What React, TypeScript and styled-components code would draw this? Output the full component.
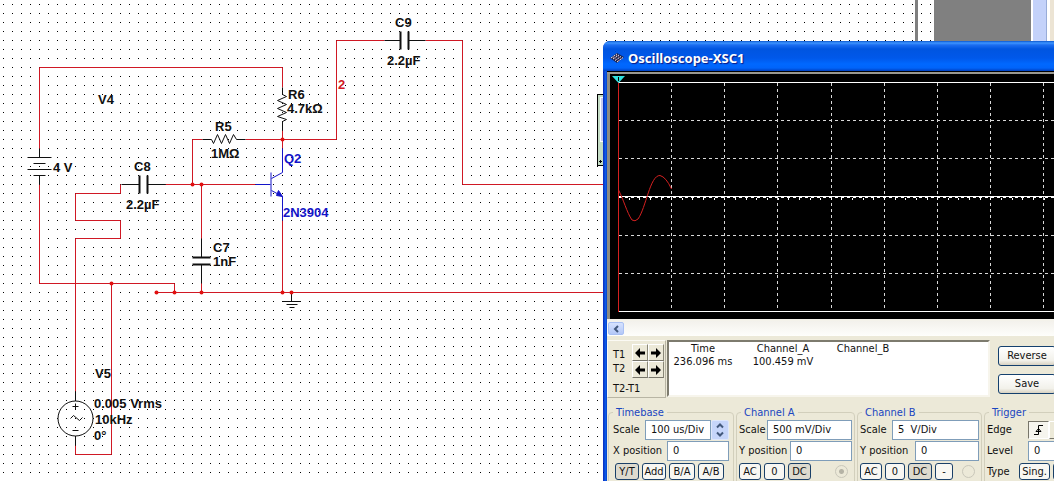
import React from "react";
import styled, { createGlobalStyle, css } from "styled-components";

const WIRE = "#d01824";
const NODE = "#e01010";
const PART = "#101010";
const CHIP = "#1414c8";

const Global = createGlobalStyle`
  *, *::before, *::after { box-sizing: border-box; }
  html, body { margin: 0; height: 100%; }
  body { overflow: hidden; background: #fff; }
  button, input { font: inherit; color: inherit; margin: 0; }
`;

const Desktop = styled.main`
  position: relative;
  height: 100vh;
  overflow: hidden;
  background: #fff;
  font: 11px/14px "DejaVu Sans Condensed", "Noto Sans", sans-serif;
  color: #111;
`;

const Schematic = styled.svg`
  display: block;
  width: 100%;
  height: 100%;
  text {
    font: bold 13px "Liberation Sans", Arial, sans-serif;
    fill: ${PART};
  }
  text.chip { fill: ${CHIP}; }
  text.net { fill: ${WIRE}; }
`;

/* ---------- oscilloscope window ---------- */

const Window = styled.section`
  position: absolute;
  top: 41px;
  left: 603px;
  right: 0;
  overflow: hidden;
  border-top-left-radius: 7px;
  padding-left: 4px;
  background: linear-gradient(90deg, #0a34c4 0 1px, #0a5ae8 2px 3px, #0838c0 4px);
`;

const TitleBar = styled.header`
  display: flex;
  align-items: center;
  gap: 4px;
  height: 30px;
  margin-left: -4px;
  padding: 4px 0 0 7px;
  background: linear-gradient(180deg, #0b57cf 0, #3d95ff 2px, #1c6df0 4px, #0055e0 8px, #0058ea 17px, #0068ff 23px, #0064fa 27px, #0040c0 30px);
  h1 {
    margin: 0;
    font: bold 13px/18px "Noto Sans", "Open Sans", sans-serif;
    color: #fff;
    text-shadow: 1px 1px 1px #0a1883;
  }
`;

const Body = styled.div`
  background: #ece9d8;
  overflow: hidden;
`;

const Screen = styled.div`
  height: 250px;
  background: #000;
  border-top: 1px solid #000;
  border-bottom: 2px solid #f4f2ea;
  box-shadow: inset 0 2px 0 #9a9890, inset 3px 0 0 #8c8a82;
  svg { display: block; width: 100%; height: 247px; }
`;

const ScrollTrack = styled.div`
  display: flex;
  align-items: center;
  height: 15px;
  background: linear-gradient(180deg, #f3f1ec, #fefefb);
`;

const ScrollButton = styled.button`
  display: grid;
  place-items: center;
  width: 16px;
  height: 13px;
  margin-left: 1px;
  padding: 0;
  border: 1px solid #a9c0f4;
  border-radius: 2px;
  background: linear-gradient(180deg, #d6e2fe, #b4c8f8);
`;

const ReadoutRow = styled.div`
  display: flex;
  width: max-content;
  min-width: 100%;
  padding-top: 4px;
`;

const Cursors = styled.div`
  display: flex;
  width: 59px;
  height: 58px;
  justify-content: space-between;
  padding: 3px 1px 0 5px;
  border: 1px solid #fbfaf4;
  border-right-color: #b8b5a4;
  border-bottom-color: #b8b5a4;
`;

const CursorNames = styled.div`
  display: flex;
  flex-direction: column;
  white-space: nowrap;
  width: 18px;
  padding-top: 4px;
  span:last-child { margin-top: 6px; }
`;

const CursorButtons = styled.div`
  display: grid;
  grid-template-columns: 16px 16px;
  grid-auto-rows: 17px;
  align-content: start;
`;

const ArrowButton = styled.button`
  display: grid;
  place-items: center;
  padding: 0;
  border: 1px solid;
  border-color: #fff #8a8878 #77756a #fff;
  background: #ece9d8;
`;

const Readout = styled.div`
  flex: 1 0 323px;
  max-width: 323px;
  height: 57px;
  margin-left: 1px;
  background: #fff;
  border: 2px solid;
  border-color: #7d7b6e #f7f5ec #f7f5ec #7d7b6e;
  table { border-collapse: collapse; table-layout: fixed; width: 228px; }
  th, td {
    padding: 0;
    font-weight: normal;
    text-align: center;
    line-height: 13px;
    white-space: nowrap;
  }
`;

const Actions = styled.div`
  display: flex;
  flex-direction: column;
  gap: 8px;
  padding: 6px 8px 0 8px;
`;

const PushButton = styled.button`
  width: 58px;
  height: 20px;
  padding: 0;
  border: 1px solid #14406e;
  border-radius: 3px;
  background: linear-gradient(180deg, #fff, #f2f1ea 75%, #d8d2c2);
`;

const Groups = styled.div`
  display: flex;
  width: max-content;
  gap: 2px;
  padding: 9px 0 0 1px;
`;

const Group = styled.fieldset<{ $width: number; $inset?: number }>`
  width: ${(p) => p.$width}px;
  margin: 0;
  padding: 0 ${(p) => p.$inset ?? 2}px 8px;
  border: 1px solid #d2cfbc;
  border-radius: 4px;
  min-width: 0;
  legend {
    margin-left: ${(p) => 4 - (p.$inset ?? 2)}px;
    padding: 0 3px;
    height: 11px;
    line-height: 11px;
    color: #1a46c0;
  }
`;

const Field = styled.div<{ $label?: number }>`
  display: flex;
  align-items: center;
  justify-content: space-between;
  height: 20px;
  margin-top: 1px;
  white-space: nowrap;
  ${(p) =>
    p.$label &&
    css`
      justify-content: flex-start;
      > :first-child { width: ${p.$label}px; }
    `}
  legend + & { margin-top: 2px; }
`;

const FieldBox = styled.span`
  display: flex;
`;

const TextBox = styled.input<{ $width: number }>`
  width: ${(p) => p.$width}px;
  height: 20px;
  padding: 0 0 2px 5px;
  border: 1px solid #7f9db9;
  background: #fff;
  outline: 0;
`;

const Spinner = styled.button`
  display: grid;
  place-items: center;
  width: 18px;
  height: 20px;
  padding: 0;
  border: 1px solid #dfe7fb;
  border-radius: 2px;
  background: #c6d5fa;
`;

const Modes = styled.div<{ $indent?: number }>`
  display: flex;
  align-items: center;
  gap: 3px;
  margin: 2px 0 0 ${(p) => p.$indent ?? 0}px;
`;

const TypeLabel = styled.span`
  width: 29px;
`;

const ModeButton = styled.button<{ $width: number; $pressed?: boolean }>`
  width: ${(p) => p.$width}px;
  height: 17px;
  padding: 0;
  line-height: 14px;
  border: 1px solid #1a4068;
  border-radius: 3px;
  background: #f8f7f2;
  ${(p) =>
    p.$pressed &&
    css`
      background: #dddace;
    `}
`;

const Radio = styled.input`
  appearance: none;
  width: 13px;
  height: 13px;
  margin: 0 4px 0 auto;
  border: 1px solid #c9c7ba;
  border-radius: 50%;
  &:checked { background: radial-gradient(circle, #b5b3a6 0 2px, transparent 3px); }
`;

const EdgeButton = styled.button<{ $pressed?: boolean }>`
  display: grid;
  place-items: center;
  width: 21px;
  height: 18px;
  padding: 0;
  border: 1px solid;
  border-color: ${(p) => (p.$pressed ? "#77756a #fff #fff #77756a" : "#fff #77756a #77756a #fff")};
  background: ${(p) => (p.$pressed ? "#f6f5ee" : "#ece9d8")};
`;

const Arrow = ({ right = false }: { right?: boolean }) => (
  <svg width="10" height="10" viewBox="0 0 10 10" aria-hidden="true">
    <path d={right ? "M10 5 5 0v3.5H0v3h5V10Z" : "M0 5 5 0v3.5h5v3H5V10Z"} fill="#000" />
  </svg>
);

const Edge = ({ falling = false }: { falling?: boolean }) => (
  <svg width="12" height="12" viewBox="0 0 12 12" fill="none" stroke="#000" aria-hidden="true">
    <path d={falling ? "M2 1.5h4v9h5M3.500 6h5" : "M1 10.500h4.500v-9H10M3 7.500l2.500-3 2.500 3Z"} />
  </svg>
);

const Dot = ({ x, y }: { x: number; y: number }) => (
  <circle cx={x + 0.5} cy={y + 0.5} r="2" fill={NODE} />
);

const Circuit = () => (
  <Schematic role="img" aria-label="Amplifier circuit">
    <defs>
      <pattern id="dots" x="3" y="4" width="9" height="9" patternUnits="userSpaceOnUse">
        <rect width="1" height="1" fill="#000" />
      </pattern>
    </defs>
    <rect width="100%" height="100%" fill="url(#dots)" />

    <rect x="915" width="3" height="481" fill="#808080" />
    <rect x="934" width="97" height="481" fill="#808080" />
    <rect x="1031" width="23" height="481" fill="#fff" />
    <rect x="1033" width="13" height="481" fill="#c4d2fa" />
    <rect x="1046" width="1" height="481" fill="#98acd8" />
    <rect x="1050" width="4" height="481" fill="#ece4d4" />

    <rect x="597.500" y="94.500" width="20" height="71" fill="#c4dcc4" stroke="#000" />
    <rect x="600.500" y="97.500" width="20" height="44" fill="#c8ccf0" stroke="#fff" />
    <path d="M599 161.500h3M600.500 160v3" stroke="#000" />

    <g transform="translate(.5 .5)" fill="none" stroke={WIRE}>
      <path d="M39 149V67H282V87" />
      <path d="M282 130V148M202 139H192V184M245 139H336V40H384" />
      <path d="M425 40H462V184H620" />
      <path d="M165 184H255M201 184V240M201 281V292" />
      <path d="M39 184V283H174V292M156 292H620M282 220V292" />
      <path d="M120 184V193H75V220H120V238H75V391M75 445V454H111V283" />
    </g>

    <g transform="translate(.5 .5)" fill="none" stroke={PART}>
      <path d="M39 148V157M27 157H51M33 163H45M27 169H51M33 175H45M39 175V184" />
      <path d="M121 184H139M147 184H165M384 40H400M408 40H425" />
      <path d="M139 175V193M147 175V193M400 31V49M408 31V49M192 257H210M192 264H210" strokeWidth="2" />
      <path d="M201 238V257M201 265V283" />
      <path d="M202 139H211L213 143 217 134 221 143 225 134 229 143 233 134 236 139H245" />
      <path d="M282 87V94L286 96 277 100 286 104 277 108 286 112 277 116 286 119 282 121V130" />
      <path d="M291 292V301M282 301H300M286 304H297M289 307H294" />
      <circle cx="75" cy="418" r="17.500" />
      <path d="M75 391V400M75 436V445M72 406H78M75 403V409M72 430H78" />
      <path d="M70 418 73 415 79 420 82 417" />
    </g>

    <g transform="translate(.5 .5)" fill="none" stroke={CHIP}>
      <path d="M282 148V172L271 178M255 184H270M271 190L282 196V220" />
      <path d="M270.500 172V196" strokeWidth="1" />
      <path d="M276 195 278 190 282 196Z" fill={CHIP} />
    </g>

    <Dot x={282} y={139} />
    <Dot x={192} y={184} />
    <Dot x={201} y={184} />
    <Dot x={111} y={283} />
    <Dot x={156} y={292} />
    <Dot x={174} y={292} />
    <Dot x={201} y={292} />
    <Dot x={282} y={292} />
    <Dot x={291} y={292} />

    <text x="98" y="104">V4</text>
    <text x="53" y="172">4 V</text>
    <text x="134" y="171">C8</text>
    <text x="126" y="209">2.2µF</text>
    <text x="215" y="131">R5</text>
    <text x="211" y="158">1MΩ</text>
    <text x="288" y="99">R6</text>
    <text x="287" y="113">4.7kΩ</text>
    <text x="395" y="27">C9</text>
    <text x="387" y="65">2.2µF</text>
    <text x="213" y="252">C7</text>
    <text x="213" y="266">1nF</text>
    <text x="95" y="378">V5</text>
    <text x="94" y="408">0.005 Vrms</text>
    <text x="95" y="424">10kHz</text>
    <text x="94" y="440">0°</text>
    <text className="net" x="338" y="89">2</text>
    <text className="chip" x="284" y="163">Q2</text>
    <text className="chip" x="283" y="217">2N3904</text>
  </Schematic>
);

const columns = Array.from({ length: 30 }, (_, i) => 64 + Math.round(i * 53.2));
const ticks = Array.from({ length: 150 }, (_, i) => 11 + Math.round(i * 10.64));

const Trace = () => (
  <svg role="img" aria-label="Channel A trace">
    <g transform="translate(.5 .5)" fill="none" stroke="#d8d8d8" shapeRendering="crispEdges">
      {columns.map((x) => (
        <path key={x} d={`M${x} 10V238`} strokeDasharray="3 3" />
      ))}
      {[48, 86, 163, 201].map((y) => (
        <path key={y} d={`M11 ${y}H1600`} strokeDasharray="3 3" />
      ))}
      <path d="M11 10H1600M11 124H1600M11 239H1600" stroke="#fff" />
      <path d="M11 125H1600" strokeDasharray="3 3" stroke="#fff" />
      {ticks.map((x) => (
        <path key={x} d={`M${x} 125V127`} stroke="#fff" />
      ))}
      <path d="M11 6V239" stroke="#d42020" />
    </g>
    <path
      d="M11.500 118C16 126 20 141 25 148Q28 150 31 147C39 136 43 103 53 103.500Q59 105 64.500 117"
      fill="none"
      stroke="#d42020"
    />
    <path d="M5 4H18L11.500 11Z" fill="#30e0e0" />
    <path d="M11.500 5V9" stroke="#000" />
  </svg>
);

const Channel = ({ name, width, scale, scaleWidth, offsetWidth, children }: {
  name: string;
  width: number;
  scale: string;
  scaleWidth: number;
  offsetWidth: number;
  children: React.ReactNode;
}) => {
  const id = name.replace(" ", "-");
  return (
    <Group $width={width}>
      <legend>{name}</legend>
      <Field>
        <label htmlFor={`${id}-scale`}>Scale</label>
        <TextBox id={`${id}-scale`} $width={scaleWidth} defaultValue={scale} />
      </Field>
      <Field>
        <label htmlFor={`${id}-pos`}>Y position</label>
        <TextBox id={`${id}-pos`} $width={offsetWidth} defaultValue="0" />
      </Field>
      <Modes>{children}</Modes>
    </Group>
  );
};

export default function App() {
  return (
    <Desktop>
      <Global />
      <Circuit />
      <Window>
        <TitleBar>
          <svg width="14" height="12" viewBox="0 0 14 12" aria-hidden="true">
            <path d="M0 6 7 1l7 4-7 6Z" fill="#1c2450" />
            <path d="M1 6l6-4M3 7l6-4M5 8.500l6-4M7 10l6-4.500" stroke="#e8e8f0" strokeDasharray="2 1" />
            <path d="M3 5l6 4M6 3l6 4" stroke="#c07878" strokeDasharray="1 1" />
          </svg>
          <h1>Oscilloscope-XSC1</h1>
        </TitleBar>
        <Body>
          <Screen>
            <Trace />
          </Screen>
          <ScrollTrack>
            <ScrollButton aria-label="Scroll left">
              <svg width="6" height="8" viewBox="0 0 6 8" fill="none" stroke="#42587c" strokeWidth="2">
                <path d="M5 1 2 4l3 3" />
              </svg>
            </ScrollButton>
          </ScrollTrack>
          <ReadoutRow>
            <Cursors>
              <CursorNames>
                <span>T1</span>
                <span>T2</span>
                <span>T2-T1</span>
              </CursorNames>
              <CursorButtons>
                <ArrowButton aria-label="T1 left"><Arrow /></ArrowButton>
                <ArrowButton aria-label="T1 right"><Arrow right /></ArrowButton>
                <ArrowButton aria-label="T2 left"><Arrow /></ArrowButton>
                <ArrowButton aria-label="T2 right"><Arrow right /></ArrowButton>
              </CursorButtons>
            </Cursors>
            <Readout>
              <table>
                <colgroup>
                  <col width="68" />
                  <col width="92" />
                  <col width="68" />
                </colgroup>
                <thead>
                  <tr><th>Time</th><th>Channel_A</th><th>Channel_B</th></tr>
                </thead>
                <tbody>
                  <tr><td>236.096 ms</td><td>100.459 mV</td><td /></tr>
                </tbody>
              </table>
            </Readout>
            <Actions>
              <PushButton>Reverse</PushButton>
              <PushButton>Save</PushButton>
            </Actions>
          </ReadoutRow>
          <Groups>
            <Group $width={126} $inset={4}>
              <legend>Timebase</legend>
              <Field>
                <label htmlFor="time-scale">Scale</label>
                <FieldBox>
                  <TextBox id="time-scale" $width={66} defaultValue="100 us/Div" />
                  <Spinner aria-label="Change scale">
                    <svg width="8" height="14" viewBox="0 0 8 14" fill="none" stroke="#42587c" strokeWidth="2">
                      <path d="M1 4.500 4 1.500l3 3M1 9.500l3 3 3-3" />
                    </svg>
                  </Spinner>
                </FieldBox>
              </Field>
              <Field>
                <label htmlFor="time-pos">X position</label>
                <TextBox id="time-pos" $width={62} defaultValue="0" />
              </Field>
              <Modes $indent={2}>
                <ModeButton $width={24} $pressed>Y/T</ModeButton>
                <ModeButton $width={24}>Add</ModeButton>
                <ModeButton $width={26}>B/A</ModeButton>
                <ModeButton $width={26}>A/B</ModeButton>
              </Modes>
            </Group>
            <Channel name="Channel A" width={119} scale="500 mV/Div" scaleWidth={85} offsetWidth={62}>
              <ModeButton $width={22}>AC</ModeButton>
              <ModeButton $width={21}>0</ModeButton>
              <ModeButton $width={23} $pressed>DC</ModeButton>
              <Radio type="radio" name="source-a" aria-label="Channel A source" defaultChecked />
            </Channel>
            <Channel name="Channel B" width={125} scale="5  V/Div" scaleWidth={87} offsetWidth={64}>
              <ModeButton $width={22}>AC</ModeButton>
              <ModeButton $width={20}>0</ModeButton>
              <ModeButton $width={24} $pressed>DC</ModeButton>
              <ModeButton $width={18}>-</ModeButton>
              <Radio type="radio" name="source-b" aria-label="Channel B source" />
            </Channel>
            <Group $width={160}>
              <legend>Trigger</legend>
              <Field $label={41}>
                <span>Edge</span>
                <FieldBox>
                  <EdgeButton $pressed aria-label="Rising edge"><Edge /></EdgeButton>
                  <EdgeButton aria-label="Falling edge"><Edge falling /></EdgeButton>
                </FieldBox>
              </Field>
              <Field $label={41}>
                <label htmlFor="level">Level</label>
                <TextBox id="level" $width={112} defaultValue="0" />
              </Field>
              <Modes>
                <TypeLabel>Type</TypeLabel>
                <ModeButton $width={31}>Sing.</ModeButton>
                <ModeButton $width={31} $pressed aria-label="Normal" />
              </Modes>
            </Group>
          </Groups>
        </Body>
      </Window>
    </Desktop>
  );
}
